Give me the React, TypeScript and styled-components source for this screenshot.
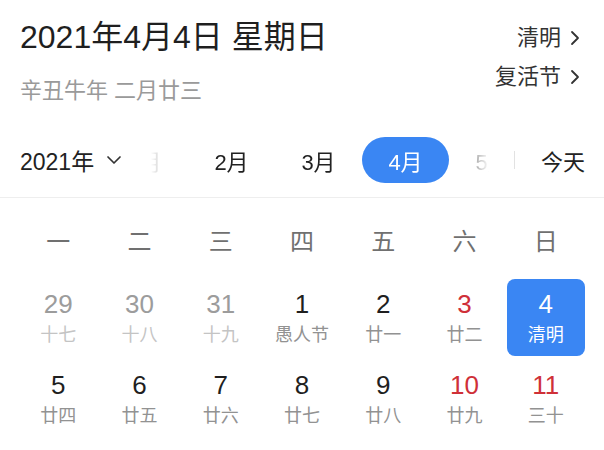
import React, { useLayoutEffect, useRef } from "react";
import styled, { createGlobalStyle } from "styled-components";

const Global = createGlobalStyle`
  html, body { margin: 0; padding: 0; background: #fff; overflow: hidden; }
  body { font-family: "Liberation Sans", "Noto Sans CJK SC", sans-serif; color: #222; }
  * { box-sizing: border-box; }
`;

const Page = styled.div`
  width: 604px;
  display: flex;
  flex-direction: column;
`;

const Header = styled.header`
  display: flex;
  justify-content: space-between;
  padding: 17px 24px 0 20px;
`;

const TitleBlock = styled.div`
  display: flex;
  flex-direction: column;
  gap: 20px;
`;

const Title = styled.h1`
  margin: 0;
  font-size: 32px;
  line-height: 40px;
  font-weight: 400;
  color: #1f1f1f;
`;

const Lunar = styled.div`
  font-size: 22px;
  line-height: 28px;
  color: #9a9a9a;
`;

const Links = styled.div`
  display: flex;
  flex-direction: column;
  align-items: flex-end;
  gap: 11px;
  padding-top: 7px;
`;

const LinkRow = styled.a`
  display: flex;
  align-items: center;
  gap: 9px;
  font-size: 22px;
  line-height: 28px;
  color: #333;
  text-decoration: none;
`;

const BarWrap = styled.div`
  border-bottom: 1px solid #eeeeee;
  padding-bottom: 14px;
`;

const MonthBar = styled.div`
  display: flex;
  align-items: center;
  height: 46px;
  margin-top: 32px;
  padding: 0 19px 0 20px;
`;

const YearPick = styled.div`
  display: flex;
  align-items: center;
  gap: 12px;
  font-size: 23px;
  color: #222;
  flex: none;
  width: 117px;
`;

const Scroller = styled.div`
  flex: none;
  width: 370px;
  height: 46px;
  display: flex;
  overflow-x: auto;
  scrollbar-width: none;
  &::-webkit-scrollbar { display: none; }
  -webkit-mask-image: linear-gradient(to right, transparent 0px, transparent 14px, #000 58px, #000 316px, transparent 352px);
  mask-image: linear-gradient(to right, transparent 0px, transparent 14px, #000 58px, #000 316px, transparent 352px);
`;

const MonthItem = styled.div<{ $active?: boolean }>`
  flex: none;
  width: 87px;
  height: 46px;
  border-radius: 23px;
  display: flex;
  align-items: center;
  justify-content: center;
  font-size: 22px;
  color: ${(p) => (p.$active ? "#fff" : "#222")};
  background: ${(p) => (p.$active ? "#3a86f3" : "transparent")};
`;

const Divider = styled.div`
  flex: none;
  width: 1px;
  height: 18px;
  background: #e2e2e2;
  margin-left: 7px;
`;

const Today = styled.div`
  margin-left: auto;
  font-size: 22px;
  color: #222;
`;

const Weekdays = styled.div`
  display: grid;
  grid-template-columns: repeat(7, 1fr);
  column-gap: 3px;
  padding: 21px 19px 0 19px;
`;

const Weekday = styled.div`
  height: 40px;
  display: flex;
  align-items: center;
  justify-content: center;
  font-size: 24px;
  color: #707070;
`;

const Grid = styled.div`
  display: grid;
  grid-template-columns: repeat(7, 1fr);
  column-gap: 3px;
  row-gap: 4px;
  padding: 20px 19px 0 19px;
`;

type Tone = "muted" | "normal" | "weekend";

const Cell = styled.div<{ $selected?: boolean }>`
  height: 77px;
  border-radius: 8px;
  display: flex;
  flex-direction: column;
  align-items: center;
  justify-content: center;
  gap: 5px;
  background: ${(p) => (p.$selected ? "#3a86f3" : "transparent")};
`;

const DayNum = styled.div<{ $tone: Tone; $selected?: boolean }>`
  font-size: 26px;
  line-height: 30px;
  color: ${(p) =>
    p.$selected ? "#fff" : p.$tone === "muted" ? "#9c9c9c" : p.$tone === "weekend" ? "#cf3038" : "#1f1f1f"};
`;

const DayLunar = styled.div<{ $tone: Tone; $selected?: boolean }>`
  font-size: 18px;
  line-height: 22px;
  color: ${(p) => (p.$selected ? "#fff" : p.$tone === "muted" ? "#c4c4c4" : "#929292")};
`;

const Chevron = ({ dir }: { dir: "right" | "down" }) =>
  dir === "right" ? (
    <svg width="10" height="16" viewBox="0 0 10 16" fill="none">
      <path d="M2 2 L8 8 L2 14" stroke="#333" strokeWidth="1.8" strokeLinecap="round" strokeLinejoin="round" />
    </svg>
  ) : (
    <svg width="16" height="10" viewBox="0 0 16 10" fill="none">
      <path d="M2 2 L8 8 L14 2" stroke="#333" strokeWidth="1.7" strokeLinecap="round" strokeLinejoin="round" />
    </svg>
  );

const weekdays = ["一", "二", "三", "四", "五", "六", "日"];

type Day = { n: number; l: string; tone: Tone; sel?: boolean };

const days: Day[] = [
  { n: 29, l: "十七", tone: "muted" },
  { n: 30, l: "十八", tone: "muted" },
  { n: 31, l: "十九", tone: "muted" },
  { n: 1, l: "愚人节", tone: "normal" },
  { n: 2, l: "廿一", tone: "normal" },
  { n: 3, l: "廿二", tone: "weekend" },
  { n: 4, l: "清明", tone: "weekend", sel: true },
  { n: 5, l: "廿四", tone: "normal" },
  { n: 6, l: "廿五", tone: "normal" },
  { n: 7, l: "廿六", tone: "normal" },
  { n: 8, l: "廿七", tone: "normal" },
  { n: 9, l: "廿八", tone: "normal" },
  { n: 10, l: "廿九", tone: "weekend" },
  { n: 11, l: "三十", tone: "weekend" },
  { n: 12, l: "三月", tone: "normal" },
  { n: 13, l: "初二", tone: "normal" },
  { n: 14, l: "初三", tone: "normal" },
  { n: 15, l: "初四", tone: "normal" },
  { n: 16, l: "初五", tone: "normal" },
  { n: 17, l: "初六", tone: "weekend" },
  { n: 18, l: "初七", tone: "weekend" },
];

const months = ["1月", "2月", "3月", "4月", "5月", "6月", "7月"];

export default function App() {
  const ref = useRef<HTMLDivElement>(null);
  useLayoutEffect(() => {
    if (ref.current) ref.current.scrollLeft = 36;
  }, []);
  return (
    <Page>
      <Global />
      <Header>
        <TitleBlock>
          <Title>2021年4月4日 星期日</Title>
          <Lunar>辛丑牛年 二月廿三</Lunar>
        </TitleBlock>
        <Links>
          <LinkRow>
            清明 <Chevron dir="right" />
          </LinkRow>
          <LinkRow>
            复活节 <Chevron dir="right" />
          </LinkRow>
        </Links>
      </Header>
      <BarWrap>
        <MonthBar>
          <YearPick>
            2021年 <Chevron dir="down" />
          </YearPick>
          <Scroller ref={ref}>
            {months.map((m) => (
              <MonthItem key={m} $active={m === "4月"}>
                {m}
              </MonthItem>
            ))}
          </Scroller>
          <Divider />
          <Today>今天</Today>
        </MonthBar>
      </BarWrap>
      <Weekdays>
        {weekdays.map((w) => (
          <Weekday key={w}>{w}</Weekday>
        ))}
      </Weekdays>
      <Grid>
        {days.map((d, i) => (
          <Cell key={i} $selected={d.sel}>
            <DayNum $tone={d.tone} $selected={d.sel}>
              {d.n}
            </DayNum>
            <DayLunar $tone={d.tone} $selected={d.sel}>
              {d.l}
            </DayLunar>
          </Cell>
        ))}
      </Grid>
    </Page>
  );
}
